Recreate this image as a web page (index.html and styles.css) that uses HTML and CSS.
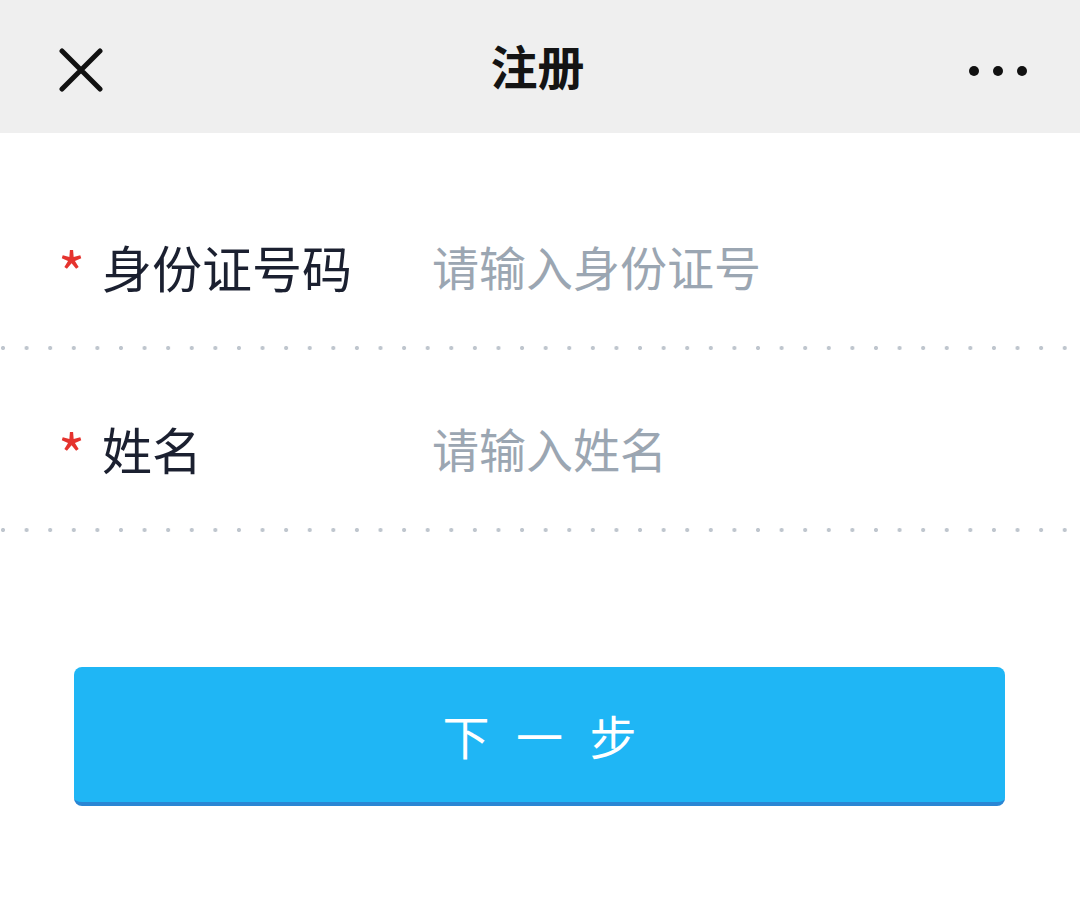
FILE: index.html
```html
<!DOCTYPE html>
<html lang="zh-CN">
<head>
<meta charset="utf-8">
<title>注册</title>
<link rel="stylesheet" href="styles.css">
</head>
<body>
<div class="page">
  <header class="topbar">
    <svg class="icon-close" width="44" height="44" viewBox="0 0 44 44" aria-hidden="true">
      <path d="M3 3 L41 41 M41 3 L3 41" stroke="#111" stroke-width="5" stroke-linecap="round" fill="none"/>
    </svg>
    <h1 class="title">注册</h1>
    <svg class="icon-more" width="60" height="12" viewBox="0 0 60 12" aria-hidden="true">
      <circle cx="6" cy="6" r="5" fill="#111"/>
      <circle cx="30" cy="6" r="5" fill="#111"/>
      <circle cx="54" cy="6" r="5" fill="#111"/>
    </svg>
  </header>

  <form class="form">
    <div class="row">
      <span class="req">*</span>
      <span class="label">身份证号码</span>
      <span class="placeholder">请输入身份证号</span>
    </div>
    <div class="dots"></div>
    <div class="row">
      <span class="req">*</span>
      <span class="label">姓名</span>
      <span class="placeholder">请输入姓名</span>
    </div>
    <div class="dots"></div>

    <div class="btn-wrap">
      <button type="button" class="btn">下 一 步</button>
    </div>
  </form>
</div>
</body>
</html>
```

FILE: styles.css
```css
html, body {
  margin: 0;
  padding: 0;
  background: #ffffff;
}

body {
  font-family: "Noto Sans CJK SC", "Noto Sans", sans-serif;
  color: #1b2030;
}

.page {
  width: 1080px;
  min-height: 898px;
  background: #ffffff;
}

.topbar {
  height: 133px;
  background: #efefef;
  display: flex;
  align-items: center;
  justify-content: space-between;
  padding: 0 52px 0 59px;
  box-sizing: border-box;
}

.icon-close {
  display: block;
  margin-top: 6px;
}

.title {
  margin: 0;
  font-size: 47px;
  font-weight: 700;
  color: #141414;
  line-height: 1;
  margin-left: 4px;
  margin-top: -4px;
}

.icon-more {
  display: block;
  margin-top: 8px;
}

.form {
  margin: 0;
  padding-top: 35px;
}

.row {
  display: flex;
  align-items: center;
  padding: 70px 0 52px 58px;
  height: 56px;
}

.req {
  width: 44px;
  color: #e5332e;
  font-size: 58px;
  line-height: 56px;
  margin-top: 10px;
}

.label {
  width: 330px;
  font-size: 50px;
  line-height: 56px;
  color: #1b2030;
}

.placeholder {
  font-size: 47px;
  line-height: 56px;
  color: #9ba6b2;
}

.dots {
  height: 4px;
  background-image: radial-gradient(circle, #bfc6ce 0, #bfc6ce 1.7px, rgba(191,198,206,0) 2.4px);
  background-size: 23.6px 4px;
  background-position: -8.8px 0;
  background-repeat: repeat-x;
}

.btn-wrap {
  padding: 135px 75px 0 74px;
}

.btn {
  display: block;
  width: 100%;
  height: 139px;
  border: none;
  border-bottom: 4px solid #2a86d4;
  border-radius: 8px;
  background: #1fb6f5;
  color: #ffffff;
  font-family: "Noto Sans CJK SC", "Noto Sans", sans-serif;
  font-size: 47px;
  letter-spacing: 8px;
  padding: 0 0 0 8px;
  line-height: 1;
}
```
